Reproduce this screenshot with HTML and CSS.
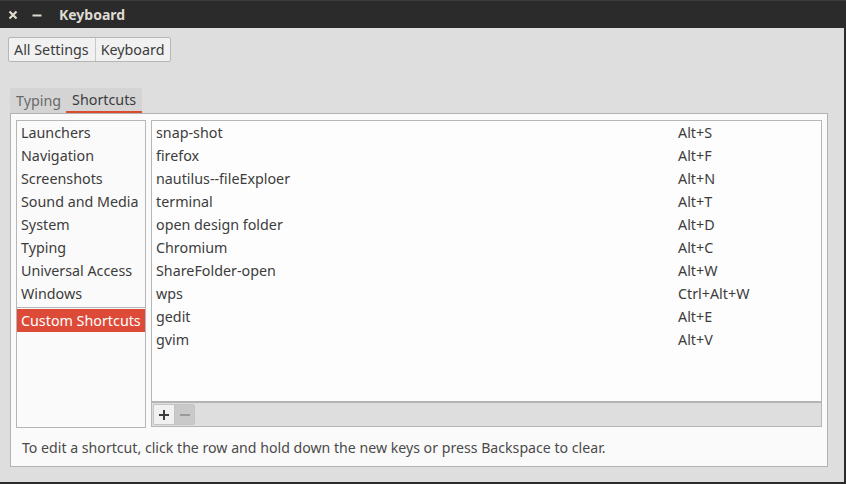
FILE: index.html
```html
<!DOCTYPE html>
<html>
<head>
<meta charset="utf-8">
<link rel="stylesheet" href="styles.css">
</head>
<body>
<div class="titlebar">
  <span class="tb-btn close"><svg width="10" height="10" viewBox="0 0 10 10"><path d="M1.5 1.5l7 7M8.5 1.5l-7 7" stroke="#dfdbd2" stroke-width="2.2"/></svg></span>
  <span class="tb-btn min"><svg width="10" height="10" viewBox="0 0 10 10"><path d="M0.5 5.5h9" stroke="#dfdbd2" stroke-width="2"/></svg></span>
  <span class="title">Keyboard</span>
</div>
<div class="window">
  <div class="toolbar">
    <div class="crumbs">
      <span class="crumb">All Settings</span>
      <span class="crumb">Keyboard</span>
    </div>
  </div>
  <div class="tabs">
    <span class="tab">Typing</span>
    <span class="tab active">Shortcuts</span>
  </div>
  <div class="notebook">
    <div class="panes">
      <div class="sections">
        <div class="row">Launchers</div>
        <div class="row">Navigation</div>
        <div class="row">Screenshots</div>
        <div class="row">Sound and Media</div>
        <div class="row">System</div>
        <div class="row">Typing</div>
        <div class="row">Universal Access</div>
        <div class="row">Windows</div>
        <div class="sep"></div>
        <div class="row selected">Custom Shortcuts</div>
      </div>
      <div class="shortcuts">
        <div class="list">
          <div class="srow"><span class="name">snap-shot</span><span class="accel">Alt+S</span></div>
          <div class="srow"><span class="name">firefox</span><span class="accel">Alt+F</span></div>
          <div class="srow"><span class="name">nautilus--fileExploer</span><span class="accel">Alt+N</span></div>
          <div class="srow"><span class="name">terminal</span><span class="accel">Alt+T</span></div>
          <div class="srow"><span class="name">open design folder</span><span class="accel">Alt+D</span></div>
          <div class="srow"><span class="name">Chromium</span><span class="accel">Alt+C</span></div>
          <div class="srow"><span class="name">ShareFolder-open</span><span class="accel">Alt+W</span></div>
          <div class="srow"><span class="name">wps</span><span class="accel">Ctrl+Alt+W</span></div>
          <div class="srow"><span class="name">gedit</span><span class="accel">Alt+E</span></div>
          <div class="srow"><span class="name">gvim</span><span class="accel">Alt+V</span></div>
        </div>
        <div class="listbar">
          <span class="lb-btn add"><svg width="12" height="12" viewBox="0 0 12 12"><path d="M6 1v10M1 6h10" stroke="#3c3c3c" stroke-width="2"/></svg></span>
          <span class="lb-btn remove"><svg width="12" height="12" viewBox="0 0 12 12"><path d="M1 6h10" stroke="#9a9a9a" stroke-width="2"/></svg></span>
        </div>
      </div>
    </div>
    <div class="hint">To edit a shortcut, click the row and hold down the new keys or press Backspace to clear.</div>
  </div>
</div>
</body>
</html>
```

FILE: styles.css
```css
* { box-sizing: border-box; }
html, body { margin: 0; padding: 0; }
body {
  width: 846px;
  height: 484px;
  background: #2b2b2b;
  font-family: "Noto Sans", "DejaVu Sans", sans-serif;
  font-size: 14.3px;
  color: #3c3c3c;
  overflow: hidden;
}
.titlebar {
  height: 28px;
  background: #2b2b2b;
  border-top: 1px solid #3d3d3d;
  display: flex;
  align-items: center;
  color: #dfdbd2;
}
.tb-btn {
  width: 10px;
  height: 10px;
  display: flex;
}
.close { margin-left: 8px; }
.min { margin-left: 14px; }
.title {
  margin-left: 17px;
  font-weight: bold;
  font-size: 14px;
}
.window {
  width: 844px;
  height: 454px;
  background: #dedede;
  display: flex;
  flex-direction: column;
}
.toolbar {
  padding: 9px 8px 0 8px;
  height: 60px;
}
.crumbs {
  display: inline-flex;
  height: 25px;
  border: 1px solid #b6b6b6;
  border-radius: 2px;
  background: #f1f1f1;
}
.crumb {
  padding: 0 6px 0 5px;
  line-height: 23px;
}
.crumb + .crumb { border-left: 1px solid #c8c8c8; }
.tabs {
  margin-left: 10px;
  display: flex;
  align-self: flex-start;
  background: #d4d4d4;
  height: 25px;
}
.tab {
  padding: 0 5px 0 6px;
  line-height: 25px;
  color: #6a6a6a;
}
.tab.active {
  color: #3c3c3c;
  border-bottom: 2px solid #dd4a2e;
  line-height: 23px;
  padding: 0 6px 0 6px;
}
.notebook {
  margin-left: 10px;
  width: 818px;
  height: 354px;
  background: #fafafa;
  border: 1px solid #b2b2b2;
  padding: 6px 5px 0 5px;
  display: flex;
  flex-direction: column;
}
.panes {
  display: flex;
  gap: 5px;
  height: 308px;
}
.sections {
  width: 130px;
  border: 1px solid #b6b6b6;
  background: #fafafa;
}
.row {
  height: 23px;
  line-height: 23px;
  padding-left: 4px;
  white-space: nowrap;
}
.sep {
  height: 2px;
  border-top: 1px solid #b6b6b6;
  margin-top: 2px;
}
.row.selected {
  background: #dd4a38;
  color: #ffffff;
}
.shortcuts {
  flex: 1;
  border: 1px solid #b6b6b6;
  height: 307px;
  display: flex;
  flex-direction: column;
  background: #fdfdfd;
}
.list {
  flex: 1;
}
.srow {
  height: 23px;
  line-height: 23px;
  display: flex;
  padding-left: 4px;
}
.name { width: 522px; }
.listbar {
  height: 25px;
  border-top: 2px solid #b4b4b4;
  background: #dedede;
  display: flex;
  padding: 1px 0 0 1px;
}
.lb-btn {
  width: 21px;
  height: 21px;
  display: flex;
  align-items: center;
  justify-content: center;
}
.add { background: #f1f1f1; border: 1px solid #c4c4c4; border-right: none; border-radius: 2px 0 0 2px; }
.remove { background: #c9c9c9; border: 1px solid #c4c4c4; border-radius: 0 2px 2px 0; }
.hint {
  padding-left: 6px;
  margin-top: 10px;
  line-height: 20px;
  font-size: 14.15px;
  color: #4a4a4a;
}
```
